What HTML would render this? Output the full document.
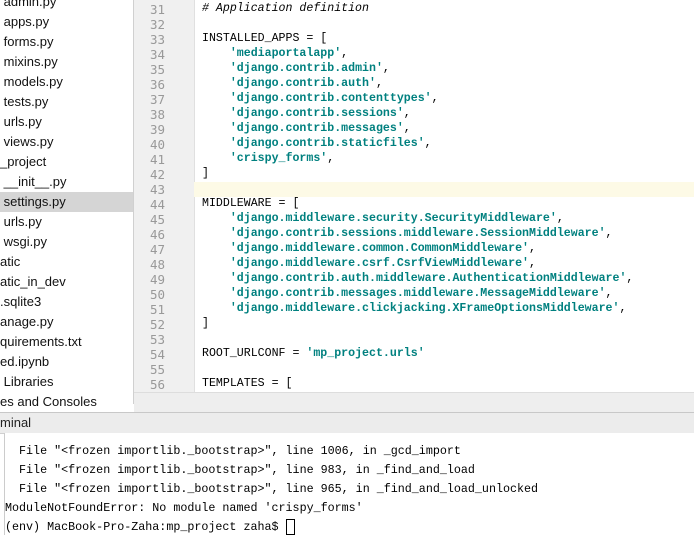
<!DOCTYPE html><html><head><style>
body{margin:0;width:694px;height:524px;overflow:hidden;background:#fff;position:relative;font-family:"Liberation Sans",sans-serif}
#side{position:absolute;left:0;top:0;width:133px;height:412px;background:#fff;border-right:1px solid #d0d0d0}
#side div{height:20px;line-height:20px;font-size:13px;color:#111;white-space:nowrap}
#gutbg{position:absolute;left:134px;top:0;width:60px;height:392px;background:#f0f0f0;border-right:1px solid #e0e0e0}
#gut{position:absolute;left:134px;top:2px;width:60px}
#gut div{height:15px;line-height:15px;text-align:right;padding-right:29px;font:12.5px "DejaVu Sans Mono",monospace;color:#999}
#code{position:absolute;left:195px;top:2px;width:499px}
#code div{height:15px;line-height:15px;padding-left:7px;font:11.6px "Liberation Mono",monospace;color:#000;white-space:pre}
.s{color:#00807f;font-weight:bold}.c{color:#808080;font-style:italic!important}
#bar{position:absolute;left:134px;top:392px;width:560px;height:20px;background:#eeeeee;border-top:1px solid #ddd}
#th{position:absolute;left:0;top:412px;width:694px;height:20px;background:#ececec;border-top:1px solid #c8c8c8;border-bottom:1px solid #d0d0d0;font-size:13px;line-height:20px;color:#222}
#term{position:absolute;left:4px;top:433px;width:690px;height:91px;border-left:1px solid #ccc;padding-top:11px;background:#fff}
#term div{height:19px;line-height:19px;font:11.7px "Liberation Mono",monospace;white-space:pre;color:#000}
</style></head><body>
<div id="side" style="top:-8px">
<div>&nbsp;admin.py</div><div>&nbsp;apps.py</div><div>&nbsp;forms.py</div><div>&nbsp;mixins.py</div><div>&nbsp;models.py</div><div>&nbsp;tests.py</div><div>&nbsp;urls.py</div><div>&nbsp;views.py</div><div>_project</div><div>&nbsp;__init__.py</div><div style="background:#d5d5d5">&nbsp;settings.py</div><div>&nbsp;urls.py</div><div>&nbsp;wsgi.py</div><div>atic</div><div>atic_in_dev</div><div>.sqlite3</div><div>anage.py</div><div>quirements.txt</div><div>ed.ipynb</div><div>&nbsp;Libraries</div><div>es and Consoles</div>
</div>
<div id="gutbg"></div>
<div id="gut"><div>31</div><div>32</div><div>33</div><div>34</div><div>35</div><div>36</div><div>37</div><div>38</div><div>39</div><div>40</div><div>41</div><div>42</div><div>43</div><div>44</div><div>45</div><div>46</div><div>47</div><div>48</div><div>49</div><div>50</div><div>51</div><div>52</div><div>53</div><div>54</div><div>55</div><div>56</div></div>
<div id="code">
<div class="c"># Application definition</div><div></div>
<div>INSTALLED_APPS = [</div>
<div>    <span class="s">'mediaportalapp'</span>,</div>
<div>    <span class="s">'django.contrib.admin'</span>,</div>
<div>    <span class="s">'django.contrib.auth'</span>,</div>
<div>    <span class="s">'django.contrib.contenttypes'</span>,</div>
<div>    <span class="s">'django.contrib.sessions'</span>,</div>
<div>    <span class="s">'django.contrib.messages'</span>,</div>
<div>    <span class="s">'django.contrib.staticfiles'</span>,</div>
<div>    <span class="s">'crispy_forms'</span>,</div>
<div>]</div>
<div style="background:#fdfae6;margin-left:-1px"></div>
<div>MIDDLEWARE = [</div>
<div>    <span class="s">'django.middleware.security.SecurityMiddleware'</span>,</div>
<div>    <span class="s">'django.contrib.sessions.middleware.SessionMiddleware'</span>,</div>
<div>    <span class="s">'django.middleware.common.CommonMiddleware'</span>,</div>
<div>    <span class="s">'django.middleware.csrf.CsrfViewMiddleware'</span>,</div>
<div>    <span class="s">'django.contrib.auth.middleware.AuthenticationMiddleware'</span>,</div>
<div>    <span class="s">'django.contrib.messages.middleware.MessageMiddleware'</span>,</div>
<div>    <span class="s">'django.middleware.clickjacking.XFrameOptionsMiddleware'</span>,</div>
<div>]</div><div></div>
<div>ROOT_URLCONF = <span class="s">'mp_project.urls'</span></div><div></div>
<div>TEMPLATES = [</div>
</div>
<div id="bar"></div>
<div id="th">minal</div>
<div id="term">
<div>  File "&lt;frozen importlib._bootstrap&gt;", line 1006, in _gcd_import</div>
<div>  File "&lt;frozen importlib._bootstrap&gt;", line 983, in _find_and_load</div>
<div>  File "&lt;frozen importlib._bootstrap&gt;", line 965, in _find_and_load_unlocked</div>
<div>ModuleNotFoundError: No module named 'crispy_forms'</div>
<div>(env) MacBook-Pro-Zaha:mp_project zaha$ <span style="border:1px solid #000">&nbsp;</span></div>
</div>
</body></html>
